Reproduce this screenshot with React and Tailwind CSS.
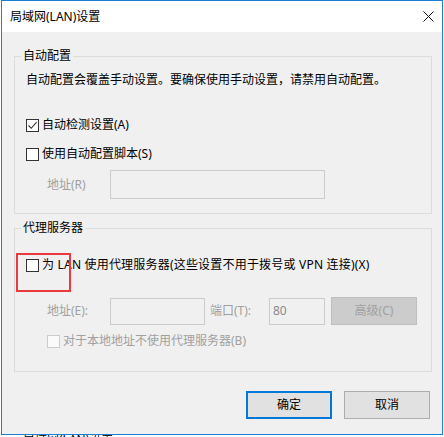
import React from "react";

function Box({ checked = false, disabled = false }) {
  return (
    <span
      className={
        disabled
          ? "w-[13px] h-[13px] shrink-0 border border-[#cccccc] bg-[#fafafa] flex items-center justify-center"
          : "w-[13px] h-[13px] shrink-0 border border-[#333333] bg-white flex items-center justify-center"
      }
    >
      {checked && (
        <svg width="11" height="11" viewBox="0 0 11 11">
          <path d="M1.5 5.5 L4.2 8.3 L9.6 2.2" stroke="#333333" strokeWidth="1.1" fill="none" />
        </svg>
      )}
    </span>
  );
}

export default function App() {
  return (
    <div className="w-[444px] h-[437px] bg-white overflow-hidden font-['Noto_Sans','Noto_Sans_CJK_SC','Microsoft_YaHei',sans-serif] text-[12px] leading-[16px] text-black">
      <div className="ml-[1px] w-[442px] h-[435px] border border-[#1a7fd6] flex flex-col bg-[#f0f0f0]">
        {/* title bar */}
        <div className="h-[31px] shrink-0 bg-white flex items-center justify-between pl-[8px] pr-[8px]">
          <span className="leading-[16px]">局域网(LAN)设置</span>
          <svg width="11" height="11" viewBox="0 0 11 11">
            <path d="M0.5 0.5 L10.5 10.5 M10.5 0.5 L0.5 10.5" stroke="#111111" strokeWidth="1" fill="none" />
          </svg>
        </div>

        {/* group 1 */}
        <fieldset className="mt-[16px] ml-[12px] mr-[10px] border border-[#dcdcdc] pb-[14px]">
          <legend className="ml-[6px] px-[2px] leading-[16px]">自动配置</legend>
          <div className="pl-[11px]">
            <p className="mt-[8px] leading-[16px]">自动配置会覆盖手动设置。要确保使用手动设置，请禁用自动配置。</p>
            <div className="mt-[29px] h-[16px] flex items-center gap-[3px]">
              <Box checked />
              <span>自动检测设置(A)</span>
            </div>
            <div className="mt-[13px] h-[16px] flex items-center gap-[3px]">
              <Box />
              <span>使用自动配置脚本(S)</span>
            </div>
            <div className="mt-[8px] flex items-center pl-[21px]">
              <span className="w-[63px] text-[#a0a0a0]">地址(R)</span>
              <div className="w-[215px] h-[29px] border border-[#cccccc] bg-[#f0f0f0]"></div>
            </div>
          </div>
        </fieldset>

        {/* group 2 */}
        <fieldset className="mt-[6px] ml-[12px] mr-[10px] border border-[#dcdcdc] pb-[22px]">
          <legend className="ml-[6px] px-[2px] leading-[16px]">代理服务器</legend>
          <div className="pl-[11px]">
            <div className="relative mt-[21px] h-[16px] flex items-center gap-[3px]">
              <Box />
              <span className="tracking-[0.2px]">为 LAN 使用代理服务器(这些设置不用于拨号或 VPN 连接)(X)</span>
              <div className="absolute left-[-10px] top-[-4px] w-[55px] h-[39px] border-2 border-[#ea3a3f] pointer-events-none"></div>
            </div>
            <div className="mt-[24px] flex items-center pl-[21px]">
              <span className="w-[63px] text-[#a0a0a0]">地址(E):</span>
              <div className="w-[95px] h-[27px] border border-[#cccccc] bg-[#f0f0f0]"></div>
              <span className="ml-[5px] w-[59px] text-[#a0a0a0]">端口(T):</span>
              <div className="w-[56px] h-[27px] border border-[#cccccc] bg-[#f0f0f0] flex items-center pl-[3px] text-[#8a8a8a]">
                80
              </div>
              <div className="ml-[6px] w-[86px] h-[28px] border border-[#bfbfbf] bg-[#cccccc] flex items-center justify-center text-[#a0a0a0]">
                高级(C)
              </div>
            </div>
            <div className="mt-[8px] h-[16px] flex items-center gap-[3px] pl-[21px]">
              <Box disabled />
              <span className="text-[#a0a0a0]">对于本地地址不使用代理服务器(B)</span>
            </div>
          </div>
        </fieldset>

        {/* buttons */}
        <div className="mt-[19px] flex justify-end gap-[12px] pr-[12px]">
          <div className="w-[86px] h-[28px] border-2 border-[#0078d7] bg-[#e1e1e1] flex items-center justify-center">
            确定
          </div>
          <div className="w-[86px] h-[28px] border border-[#adadad] bg-[#e1e1e1] flex items-center justify-center">
            取消
          </div>
        </div>
      </div>
      <div className="h-[2px] overflow-hidden pl-[23px]">
        <div className="leading-[12px] mt-[-1px]">局域网(LAN)设置</div>
      </div>
    </div>
  );
}
